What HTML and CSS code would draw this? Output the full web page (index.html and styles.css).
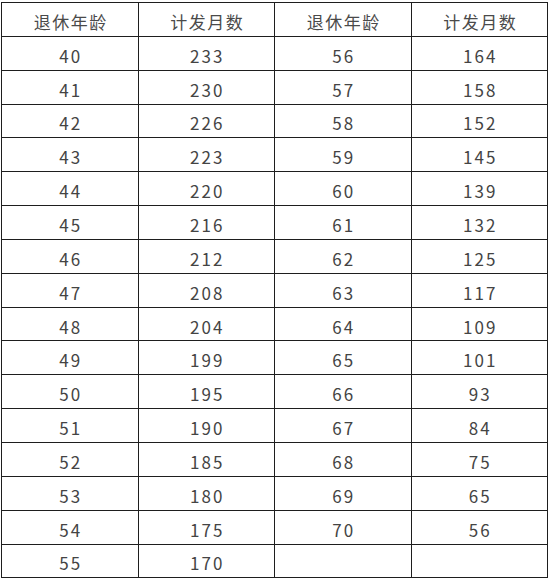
FILE: index.html
```html
<!DOCTYPE html>
<html lang="zh-CN">
<head>
<meta charset="utf-8">
<title>退休年龄与计发月数</title>
<link rel="stylesheet" href="styles.css">
</head>
<body>
<table class="months">
  <thead>
    <tr><th>退休年龄</th><th>计发月数</th><th>退休年龄</th><th>计发月数</th></tr>
  </thead>
  <tbody>
    <tr><td>40</td><td>233</td><td>56</td><td>164</td></tr>
    <tr><td>41</td><td>230</td><td>57</td><td>158</td></tr>
    <tr><td>42</td><td>226</td><td>58</td><td>152</td></tr>
    <tr><td>43</td><td>223</td><td>59</td><td>145</td></tr>
    <tr><td>44</td><td>220</td><td>60</td><td>139</td></tr>
    <tr><td>45</td><td>216</td><td>61</td><td>132</td></tr>
    <tr><td>46</td><td>212</td><td>62</td><td>125</td></tr>
    <tr><td>47</td><td>208</td><td>63</td><td>117</td></tr>
    <tr><td>48</td><td>204</td><td>64</td><td>109</td></tr>
    <tr><td>49</td><td>199</td><td>65</td><td>101</td></tr>
    <tr><td>50</td><td>195</td><td>66</td><td>93</td></tr>
    <tr><td>51</td><td>190</td><td>67</td><td>84</td></tr>
    <tr><td>52</td><td>185</td><td>68</td><td>75</td></tr>
    <tr><td>53</td><td>180</td><td>69</td><td>65</td></tr>
    <tr><td>54</td><td>175</td><td>70</td><td>56</td></tr>
    <tr><td>55</td><td>170</td><td></td><td></td></tr>
  </tbody>
</table>
</body>
</html>
```
FILE: styles.css
```css
html, body {
  margin: 0;
  padding: 0;
  background: #ffffff;
}

.months {
  margin: 2px 0 0 1px;
  width: 547px;
  border-collapse: collapse;
  table-layout: fixed;
  font-family: "Noto Sans CJK SC", sans-serif;
  font-size: 17px;
  color: #444444;
  letter-spacing: 2px;
}

.months tr {
  height: 33.85px;
}

.months th,
.months td {
  width: 25%;
  box-sizing: border-box;
  padding: 5px 0 0 2px;
  border: 1px solid #1e1e1e;
  text-align: center;
  vertical-align: middle;
  font-weight: normal;
  line-height: 20px;
}

.months th {
  letter-spacing: 1.5px;
  color: #4a4a4a;
}
```
